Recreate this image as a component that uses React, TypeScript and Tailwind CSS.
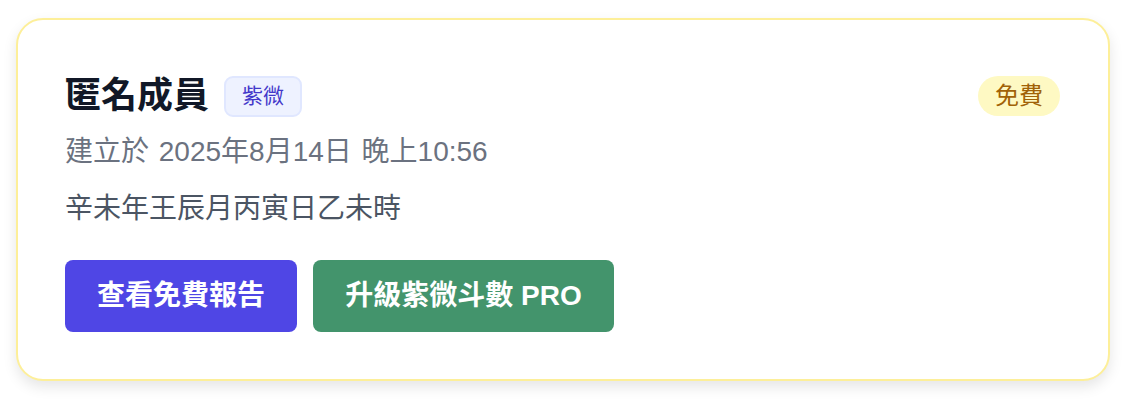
import React from "react";

const font = {
  fontFamily:
    '"Liberation Sans", "Noto Sans CJK TC", "Noto Sans CJK SC", sans-serif',
};

export default function App() {
  return (
    <div className="min-h-[404px] w-[1132px] bg-white pt-[18px]" style={font}>
      <div className="ml-[16px] w-[1094px] h-[363px] rounded-[27px] border-2 border-[#fdef99] bg-white shadow-[0_6px_14px_rgba(0,0,0,0.10)] pl-[47px] pr-[48px] pt-[52px]">
        <div className="flex items-start justify-between">
          <div className="flex items-center gap-[15px] h-[48px]">
            <h1 className="text-[36px] leading-[48px] font-bold text-[#111827]">匿名成員</h1>
            <span className="h-[41px] flex items-center px-[16px] rounded-[9px] border-2 border-[#e0e7ff] bg-[#eef2ff] text-[21px] text-[#4338ca]">
              紫微
            </span>
          </div>
          <span className="mt-[4px] h-[40px] flex items-center px-[17px] rounded-full bg-[#fef9c3] text-[24px] text-[#a16207]">
            免費
          </span>
        </div>
        <p className="mt-[11px] text-[28px] leading-[42px] text-[#6b7280] [word-spacing:2px]">
          建立於 2025年8月14日 晚上10:56
        </p>
        <p className="mt-[15px] text-[28px] leading-[42px] text-[#4b5563]">
          辛未年王辰月丙寅日乙未時
        </p>
        <div className="mt-[30px] flex gap-[16px]">
          <button className="h-[72px] w-[232px] rounded-[8px] bg-[#4f46e5] text-white text-[28px] font-bold">
            查看免費報告
          </button>
          <button className="h-[72px] w-[301px] rounded-[8px] bg-[#43946c] text-white text-[28px] font-bold">
            升級紫微斗數 PRO
          </button>
        </div>
      </div>
    </div>
  );
}
